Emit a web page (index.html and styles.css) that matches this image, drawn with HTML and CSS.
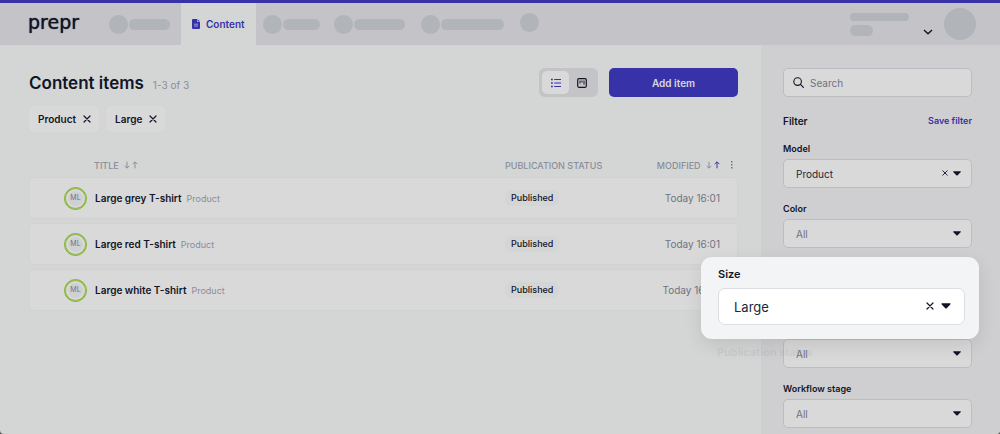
FILE: index.html
```
<!DOCTYPE html>
<html lang="en">
<head>
<meta charset="utf-8">
<title>Content items</title>
<link rel="stylesheet" href="styles.css">
</head>
<body>
<svg class="defs" aria-hidden="true">
  <symbol id="cross" viewBox="0 0 8 8"><path d="M1 1l6 6M7 1L1 7" fill="none" stroke="currentColor" stroke-width="1.2" stroke-linecap="round"/></symbol>
  <symbol id="caret" viewBox="0 0 8 5"><path d="M.8.2h6.4c.6 0 .8.6.4 1L4.6 4.3a.8.8 0 0 1-1.2 0L.4 1.2C0 .8.200.2.8.2z" fill="currentColor"/></symbol>
  <symbol id="down" viewBox="0 0 6 8"><path d="M3 .7v6.400M.7 4.900L3 7.200l2.300-2.300" fill="none" stroke="currentColor"/></symbol>
  <symbol id="up" viewBox="0 0 6 8"><path d="M3 7.300V.9M.7 3.100L3 .8l2.300 2.300" fill="none" stroke="currentColor"/></symbol>
</svg>
<div class="app">
  <header class="topbar">
    <div class="logo">prepr</div>
    <nav class="nav">
      <span class="ghost"><i class="dot"></i><i class="bar bar-m"></i></span>
      <a class="tab" href="#">
        <svg width="8" height="10" viewBox="0 0 8 10"><path d="M1 0h4v3h3v6a1 1 0 0 1-1 1H1a1 1 0 0 1-1-1V1a1 1 0 0 1 1-1zM5.600 0L8 2.400H5.600z" fill="currentColor"/><path d="M2 5.200h4M2 7h4" stroke="#b9b8da" stroke-width=".8"/></svg>
        Content
      </a>
      <span class="ghost ghost-a"><i class="dot"></i><i class="bar bar-s"></i></span>
      <span class="ghost ghost-b"><i class="dot"></i><i class="bar bar-l"></i></span>
      <span class="ghost ghost-c"><i class="dot"></i><i class="bar bar-xl"></i></span>
      <span class="ghost ghost-d"><i class="dot"></i></span>
    </nav>
    <div class="account">
      <div class="account-lines"><i class="line"></i><i class="line line-short"></i></div>
      <button class="account-toggle" aria-label="Account menu"><svg width="10" height="6" viewBox="0 0 10 6"><path d="M1 1l4 3.800L9 1" fill="none" stroke="currentColor" stroke-width="1.400"/></svg></button>
      <i class="avatar-lg"></i>
    </div>
  </header>
  <div class="body">
    <main class="main">
      <div class="heading">
        <h1>Content items</h1>
        <span class="count">1-3 of 3</span>
        <div class="switch">
          <button class="switch-btn active" aria-label="List view"><svg width="10" height="10" viewBox="0 0 10 10"><path d="M0 1.500h1.800M0 5h1.800M0 8.500h1.800" stroke="currentColor" stroke-width="1.500"/><path d="M3.200 1.500H10M3.200 5H10M3.200 8.500H10" stroke="currentColor"/></svg></button>
          <button class="switch-btn" aria-label="Board view"><svg width="10" height="10" viewBox="0 0 10 10"><rect x=".7" y=".7" width="8.600" height="8.600" rx="1.200" fill="none" stroke="currentColor" stroke-width="1.200"/><path d="M3 2.500v3M5 2.500v2M7 2.500v4" stroke="currentColor" stroke-width="1"/></svg></button>
        </div>
        <button class="add">Add item</button>
      </div>
      <div class="chips">
        <button class="chip">Product <svg width="8" height="8"><use href="#cross"/></svg></button>
        <button class="chip">Large <svg width="8" height="8"><use href="#cross"/></svg></button>
      </div>
      <table class="items">
        <colgroup><col class="c-avatar"><col><col class="c-status"><col class="c-modified"><col class="c-menu"></colgroup>
        <thead>
          <tr>
            <th></th>
            <th>TITLE <svg class="sort" width="6" height="8"><use href="#down"/></svg><svg class="sort-up" width="6" height="8"><use href="#up"/></svg></th>
            <th>PUBLICATION STATUS</th>
            <th class="right">MODIFIED <svg class="sort" width="6" height="8"><use href="#down"/></svg><svg class="sort-up on" width="6" height="8"><use href="#up"/></svg></th>
            <th class="menu"><svg width="2" height="8" viewBox="0 0 2 8"><path d="M0 0h1.500v1.500H0zM0 3h1.500v1.500H0zM0 6h1.500v1.500H0z" fill="currentColor"/></svg></th>
          </tr>
        </thead>
        <tbody>
          <tr><td><span class="avatar">ML</span></td><td><b>Large grey T-shirt</b><small>Product</small></td><td><span class="badge">Published</span></td><td class="right date">Today 16:01</td><td></td></tr>
          <tr><td><span class="avatar">ML</span></td><td><b>Large red T-shirt</b><small>Product</small></td><td><span class="badge">Published</span></td><td class="right date">Today 16:01</td><td></td></tr>
          <tr><td><span class="avatar">ML</span></td><td><b>Large white T-shirt</b><small>Product</small></td><td><span class="badge">Published</span></td><td class="right date">Today 16:00</td><td></td></tr>
        </tbody>
      </table>
    </main>
    <aside class="side">
      <label class="search">
        <svg width="11" height="11" viewBox="0 0 11 11"><circle cx="4.600" cy="4.600" r="3.800" fill="none" stroke="currentColor" stroke-width="1.100"/><path d="M7.400 7.400l3 3" stroke="currentColor" stroke-width="1.200" stroke-linecap="round"/></svg>
        <input type="search" placeholder="Search" aria-label="Search">
      </label>
      <div class="filter-head"><h2>Filter</h2><a href="#">Save filter</a></div>
      <div class="fields">
        <div class="field">
          <label for="model">Model</label>
          <div class="control"><select id="model" class="chosen"><option>Product</option></select><button class="clear" aria-label="Clear model"><svg width="6" height="6"><use href="#cross"/></svg></button><svg class="caret" width="8" height="5"><use href="#caret"/></svg></div>
        </div>
        <div class="field">
          <label for="color">Color</label>
          <div class="control"><select id="color"><option>All</option></select><svg class="caret" width="8" height="5"><use href="#caret"/></svg></div>
        </div>
        <div class="field">
          <div class="spotlight">
            <label for="size">Size</label>
            <div class="control"><select id="size" class="chosen"><option>Large</option></select><button class="clear" aria-label="Clear size"><svg width="8" height="8"><use href="#cross"/></svg></button><svg class="caret" width="10" height="6"><use href="#caret"/></svg></div>
          </div>
        </div>
        <div class="field">
          <label class="faded" for="publication">Publication status</label>
          <div class="control"><select id="publication"><option>All</option></select><svg class="caret" width="8" height="5"><use href="#caret"/></svg></div>
        </div>
        <div class="field">
          <label for="workflow">Workflow stage</label>
          <div class="control"><select id="workflow"><option>All</option></select><svg class="caret" width="8" height="5"><use href="#caret"/></svg></div>
        </div>
      </div>
    </aside>
  </div>
</div>
</body>
</html>
```
FILE: styles.css
```
* { box-sizing: border-box; }
html { background: #555; }
body { margin: 0; font: 10px/14px Inter, "Liberation Sans", sans-serif; color: #111527; }
button, input, select { font: inherit; color: inherit; border: 0; background: none; padding: 0; margin: 0; }
a { text-decoration: none; color: #3832a8; }
svg { display: block; flex: none; }
.defs { position: absolute; width: 0; height: 0; }

.app { min-height: 100vh; display: flex; flex-direction: column; background: #d4d6d5; border-radius: 0 0 4px 4px; overflow: hidden; }

.topbar { display: flex; align-items: stretch; height: 45px; border-top: 3px solid #3832a8; background: #c4c3c8; padding: 0 24px 0 28px; }
.logo { width: 81px; font-family: "DejaVu Sans", sans-serif; font-size: 19px; line-height: 38px; text-shadow: 0 0 1px #111527; }
.nav { display: flex; flex: 1; }
.ghost { display: flex; align-items: center; gap: 1px; }
.dot { width: 19px; height: 19px; border-radius: 50%; background: #b1b4b8; }
.bar { height: 11px; border-radius: 6px; background: #b1b4b8; }
.bar-s { width: 37px; }
.bar-m { width: 41px; }
.bar-l { width: 51px; }
.bar-xl { width: 63px; }
.tab { display: flex; align-items: center; gap: 6px; width: 75px; margin-left: 11px; padding-left: 11px; background: #d4d6d5; font-weight: 600; }
.ghost-a { margin-left: 7px; }
.ghost-b { margin-left: 14px; }
.ghost-c { margin-left: 16px; }
.ghost-d { margin-left: 16px; padding-bottom: 4px; }
.account { display: flex; align-items: center; }
.account-lines { display: grid; gap: 4px; width: 73px; }
.line { width: 59px; height: 8px; border-radius: 4px; background: #b1b4b8; }
.line-short { width: 23px; height: 11px; border-radius: 6px; }
.account-toggle { padding-top: 15px; margin-right: 11px; }
.avatar-lg { width: 32px; height: 32px; border-radius: 50%; background: #b1b4b8; }

.body { flex: 1; display: flex; }
.main { flex: 1; padding: 23px 23px 0 29px; }
.heading { display: flex; align-items: center; height: 29px; }
h1 { margin: 0; font-size: 17px; line-height: 24px; font-weight: 600; }
.count { flex: 1; margin-left: 9px; padding-top: 4px; color: #8b8d9a; }
.switch { display: flex; height: 29px; padding: 3px; border-radius: 6px; background: #c4c3c8; }
.switch-btn { display: grid; place-items: center; width: 26px; border-radius: 5px; }
.switch-btn.active { width: 27px; background: #d9d9d9; color: #3832a8; }
.add { width: 129px; height: 29px; margin-left: 11px; border-radius: 5px; background: #3832a8; color: #d9d9de; font-weight: 600; }

.chips { display: flex; gap: 7px; margin-top: 9px; }
.chip { display: flex; align-items: center; gap: 7px; height: 26px; padding: 0 8px 0 9px; border-radius: 4px; background: #d9d9d9; font-weight: 600; box-shadow: 0 0 1px #c4c6c8; }

.items { width: 100%; margin-top: 23px; border-spacing: 0 4px; table-layout: fixed; }
.c-avatar { width: 65px; }
.c-status { width: 133px; }
.c-modified { width: 82px; }
.c-menu { width: 18px; }
th { height: 14px; padding: 0; text-align: left; font-size: 9px; line-height: 12px; font-weight: 500; color: #8b8d9a; white-space: nowrap; }
th svg { display: inline-block; }
.sort { margin-left: 3px; }
.sort-up { margin-left: 2px; }
.on { color: #3832a8; }
.items .menu { text-align: center; color: #6f7282; padding-left: 6px; }
td { height: 42px; padding: 0; background: #d9d9d9; border: solid #d0d3d2; border-width: 1px 0; white-space: nowrap; }
td:first-child { padding-left: 34px; border-left-width: 1px; border-radius: 5px 0 0 5px; }
td:last-child { border-right-width: 1px; border-radius: 0 5px 5px 0; }
td:nth-child(2) { padding-left: 1px; }
.right { text-align: right; }
.date { color: #6f7282; }
.avatar { display: grid; place-items: center; width: 23px; height: 23px; border: 1px solid #7fb02c; border-radius: 50%; background: #d9d9d9; box-shadow: inset 0 0 0 1px #8fb84a, inset 0 0 0 3px #d9d9d9, inset 0 0 0 12px #cfd0d3; font-size: 7px; color: #6f7282; }
b { font-weight: 600; }
small { margin-left: 5px; font-size: 9px; color: #8b8d9a; }
.badge { display: inline-block; padding: 1px 6px; border-radius: 6px; background: #d4d6d5; font-size: 9px; font-weight: 500; }

.side { flex: 0 0 239px; min-width: 0; padding: 23px 28px 6px 22px; background: #cfcfd1; }
.search { display: flex; align-items: center; gap: 6px; height: 29px; padding: 0 9px; border: 1px solid #bcbdc2; border-radius: 5px; background: #d9d9d9; }
.search input { flex: 1; min-width: 0; outline: 0; }
.search input::placeholder { color: #6f7282; opacity: 1; }
.filter-head { display: flex; justify-content: space-between; align-items: center; margin-top: 17px; font-size: 9px; font-weight: 600; }
h2 { margin: 0; font-size: 10px; font-weight: 600; }
.fields { display: grid; gap: 14px; margin-top: 14px; }
.field { position: relative; display: flex; flex-direction: column; justify-content: flex-end; gap: 3px; min-height: 46px; }
.field label { font-size: 9px; font-weight: 600; }
.control { position: relative; }
select { display: block; appearance: none; width: 100%; height: 29px; padding: 0 36px 0 12px; border: 1px solid #bcbdc2; border-radius: 5px; background: #d9d9d9; line-height: 20px; color: #6f7282; }
select.chosen { color: #222638; }
.caret { position: absolute; right: 11px; top: 12px; pointer-events: none; }
.clear { position: absolute; right: 24px; top: 11px; }

.spotlight { position: absolute; z-index: 1; top: -5px; left: -82px; right: -7px; padding: 10px 14px 14px 17px; border-radius: 11px; background: #f3f4f6; box-shadow: 0 6px 18px rgba(0, 0, 0, .1); }
.field .spotlight label { display: block; margin-bottom: 7px; font-size: 11px; }
.spotlight select { height: 37px; padding: 0 48px 0 15px; border-color: #dcdde3; border-radius: 7px; background: #fff; font-size: 13px; }
.spotlight .caret { right: 14px; top: 15px; }
.spotlight .clear { right: 31px; top: 14px; }
.field .faded { position: absolute; z-index: 1; left: -66px; top: 23px; font-size: 11px; color: #777c88; opacity: .13; }
```
